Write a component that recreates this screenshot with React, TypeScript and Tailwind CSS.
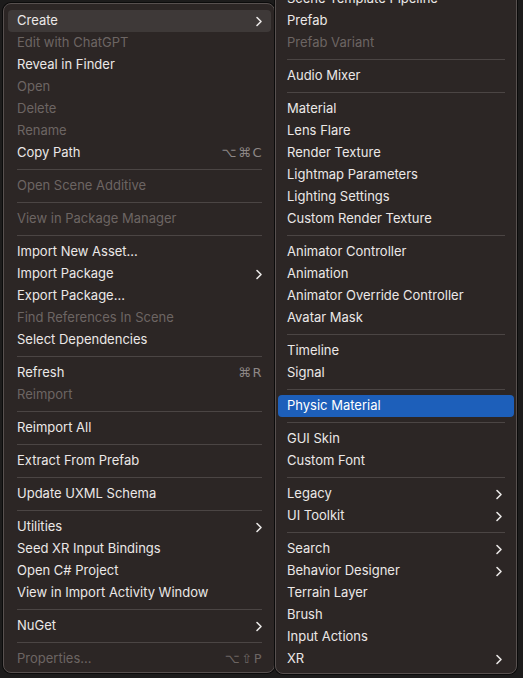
import type { JSX } from "react";

type Item =
  | { sep: true }
  | {
      sep?: false;
      label: string;
      disabled?: boolean;
      sub?: boolean;
      shortcut?: string;
      hover?: boolean;
      active?: boolean;
    };

const S: Item = { sep: true };

const leftItems: Item[] = [
  { label: "Create", sub: true, hover: true },
  { label: "Edit with ChatGPT", disabled: true },
  { label: "Reveal in Finder" },
  { label: "Open", disabled: true },
  { label: "Delete", disabled: true },
  { label: "Rename", disabled: true },
  { label: "Copy Path", shortcut: "⌥⌘C" },
  S,
  { label: "Open Scene Additive", disabled: true },
  S,
  { label: "View in Package Manager", disabled: true },
  S,
  { label: "Import New Asset..." },
  { label: "Import Package", sub: true },
  { label: "Export Package..." },
  { label: "Find References In Scene", disabled: true },
  { label: "Select Dependencies" },
  S,
  { label: "Refresh", shortcut: "⌘R" },
  { label: "Reimport", disabled: true },
  S,
  { label: "Reimport All" },
  S,
  { label: "Extract From Prefab" },
  S,
  { label: "Update UXML Schema" },
  S,
  { label: "Utilities", sub: true },
  { label: "Seed XR Input Bindings" },
  { label: "Open C# Project" },
  { label: "View in Import Activity Window" },
  S,
  { label: "NuGet", sub: true },
  S,
  { label: "Properties...", disabled: true, shortcut: "⌥⇧P" },
];

const rightItems: Item[] = [
  { label: "Scene Template Pipeline" },
  { label: "Prefab" },
  { label: "Prefab Variant", disabled: true },
  S,
  { label: "Audio Mixer" },
  S,
  { label: "Material" },
  { label: "Lens Flare" },
  { label: "Render Texture" },
  { label: "Lightmap Parameters" },
  { label: "Lighting Settings" },
  { label: "Custom Render Texture" },
  S,
  { label: "Animator Controller" },
  { label: "Animation" },
  { label: "Animator Override Controller" },
  { label: "Avatar Mask" },
  S,
  { label: "Timeline" },
  { label: "Signal" },
  S,
  { label: "Physic Material", active: true },
  S,
  { label: "GUI Skin" },
  { label: "Custom Font" },
  S,
  { label: "Legacy", sub: true },
  { label: "UI Toolkit", sub: true },
  S,
  { label: "Search", sub: true },
  { label: "Behavior Designer", sub: true },
  { label: "Terrain Layer" },
  { label: "Brush" },
  { label: "Input Actions" },
  { label: "XR", sub: true },
];

const Chevron = (): JSX.Element => (
  <svg width="8" height="11" viewBox="0 0 8 11" className="shrink-0">
    <path
      d="M2 1.5l4 4-4 4"
      fill="none"
      stroke="currentColor"
      strokeWidth="1.6"
      strokeLinecap="round"
      strokeLinejoin="round"
    />
  </svg>
);

const Menu = ({ items, pr }: { items: Item[]; pr: string }): JSX.Element => {
  return (
    <div className="flex flex-col">
      {items.map((item, i) => {
        if (item.sep) {
          return (
            <div key={i} className="flex h-[11px] items-center px-[9px]">
              <div className="h-px w-full bg-[#4b4544]" />
            </div>
          );
        }
        return (
          <div
            key={i}
            className={
              "flex h-[22px] items-center justify-between rounded-[4px] pl-[9px] " +
              pr +
              " " +
              (item.active
                ? "bg-[#1d5fba] text-white"
                : item.hover
                  ? "bg-[#3e3938] text-[#ebe8e7]"
                  : item.disabled
                    ? "text-[#6c6563]"
                    : "text-[#ebe8e7]")
            }
          >
            <span className="whitespace-nowrap">{item.label}</span>
            {item.sub && <Chevron />}
            {item.shortcut && (
              <span
                className={
                  "tracking-[1.5px] " +
                  (item.disabled ? "text-[#6c6563]" : "text-[#8d8786]")
                }
                style={{ fontFamily: '"DejaVu Sans", Inter, sans-serif' }}
              >
                {item.shortcut}
              </span>
            )}
          </div>
        );
      })}
    </div>
  );
};

export default function App(): JSX.Element {
  return (
    <div
      className="flex h-[678px] w-[523px] items-start overflow-hidden bg-[#1c1b1b] pl-[3px] pt-[3px] text-[13px]"
      style={{ fontFamily: 'Inter, "Noto Sans", sans-serif' }}
    >
      <div className="w-[272px] rounded-[8px] border border-[#57504f] bg-[#2c2625] pb-[2px] pl-[4px] pr-[3px] pt-[6px] shadow-[0_0_0_1px_#0b0b0b]">
        <Menu items={leftItems} pr="pr-[8px]" />
      </div>
      <div className="-mt-[21px] w-[242px] rounded-[8px] border border-[#57504f] bg-[#2c2625] px-[2px] pb-[3px] pt-[5px] shadow-[0_0_0_1px_#0b0b0b]">
        <Menu items={rightItems} pr="pr-[11px]" />
      </div>
    </div>
  );
}
